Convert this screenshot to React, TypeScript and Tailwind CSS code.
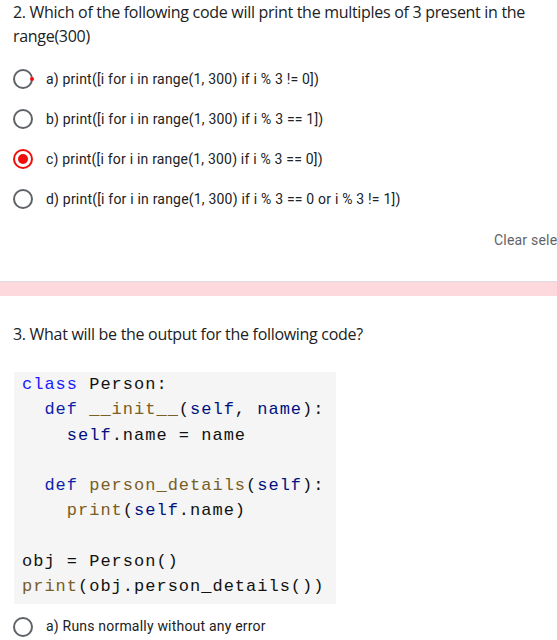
import React from "react";

const Radio = ({ checked = false, dot = false }: { checked?: boolean; dot?: boolean }) => (
  <div className="relative w-5 h-5 shrink-0">
    {checked ? (
      <div className="w-5 h-5 rounded-full border-2 border-[#f20d0d] flex items-center justify-center">
        <div className="w-[10px] h-[10px] rounded-full bg-[#f20d0d]" />
      </div>
    ) : (
      <div className="w-5 h-5 rounded-full border-2 border-[#5f6368]" />
    )}
    {dot && <div className="absolute right-[-1px] top-[8px] w-[4px] h-[4px] rounded-full bg-[#f20d0d]" />}
  </div>
);

const Option = ({ label, checked, dot }: { label: string; checked?: boolean; dot?: boolean }) => (
  <div className="flex items-center h-[40px] pl-[13px] gap-[13px]">
    <Radio checked={checked} dot={dot} />
    <span className="text-[14px] text-[#202124] tracking-[0.2px] whitespace-nowrap" style={{ fontFamily: "Roboto, sans-serif" }}>
      {label}
    </span>
  </div>
);

const K = ({ c, children }: { c: string; children: React.ReactNode }) => <span className={c}>{children}</span>;

export default function App() {
  return (
    <div className="w-[557px] h-[640px] overflow-hidden bg-white" style={{ fontFamily: "Roboto, sans-serif" }}>
      <div
        className="pl-[13px] pr-0 text-[16px] leading-[24px] text-[#202124] tracking-[-0.3px]"
        style={{ fontFamily: "'Open Sans', sans-serif" }}
      >
        2. Which of the following code will print the multiples of 3 present in the range(300)
      </div>
      <div className="mt-[11px]">
        <Option label="a) print([i for i in range(1, 300) if i % 3 != 0])" dot />
        <Option label="b) print([i for i in range(1, 300) if i % 3 == 1])" />
        <Option label="c) print([i for i in range(1, 300) if i % 3 == 0])" checked />
        <Option label="d) print([i for i in range(1, 300) if i % 3 == 0 or i % 3 != 1])" />
      </div>
      <div className="flex justify-end mt-[11px] whitespace-nowrap">
        <span className="text-[14px] text-[#5f6368] w-[63px] tracking-[0.2px]">Clear selection</span>
      </div>
      <div className="mt-[30px] h-[15px] border-t border-[#dadce0] bg-[#fdd8dc]" />
      <div
        className="mt-[26px] pl-[13px] text-[16px] leading-[24px] text-[#202124] tracking-[-0.3px]"
        style={{ fontFamily: "'Open Sans', sans-serif" }}
      >
        3. What will be the output for the following code?
      </div>
      <div className="mt-[26px] ml-[14px] w-[322px] bg-[#f5f5f5] pl-[8px] pt-0 pb-[4px]">
        <pre
          className="text-[17px] leading-[25.3px] tracking-[1px] text-[#111]"
          style={{ fontFamily: "'Liberation Mono', monospace" }}
        >
          <K c="text-[#1a1aff]">class</K> Person:{"\n"}
          {"  "}<K c="text-[#0d1fa8]">def</K> <K c="text-[#795e26]">__init__</K>(<K c="text-[#001080]">self</K>, <K c="text-[#001080]">name</K>):{"\n"}
          {"    "}<K c="text-[#001080]">self</K>.name = name{"\n"}
          {"\n"}
          {"  "}<K c="text-[#0d1fa8]">def</K> <K c="text-[#795e26]">person_details</K>(<K c="text-[#001080]">self</K>):{"\n"}
          {"    "}<K c="text-[#795e26]">print</K>(<K c="text-[#001080]">self</K>.name){"\n"}
          {"\n"}
          obj = Person(){"\n"}
          <K c="text-[#795e26]">print</K>(obj.person_details())
        </pre>
      </div>
      <div className="mt-[3px]">
        <Option label="a) Runs normally without any error" />
      </div>
    </div>
  );
}
